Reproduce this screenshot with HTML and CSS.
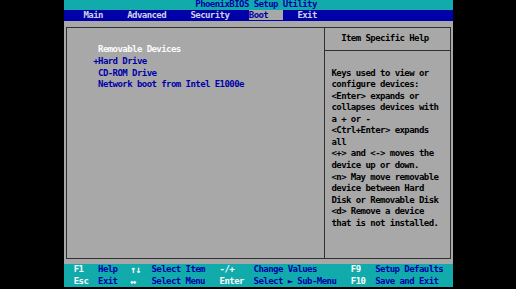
FILE: index.html
```html
<!DOCTYPE html>
<html>
<head>
<meta charset="utf-8">
<title>PhoenixBIOS Setup Utility</title>
<link rel="stylesheet" href="styles.css">
</head>
<body>
<div class="screen">
  <div class="title">PhoenixBIOS Setup Utility</div>
  <div class="menubar">Main     Advanced     Security    <span class="active">Boot   </span>   Exit</div>
  <div class="main">
    <div class="box">
      <div class="left">
        <div class="item white"> Removable Devices</div>
        <div class="item">+Hard Drive</div>
        <div class="item"> CD-ROM Drive</div>
        <div class="item"> Network boot from Intel E1000e</div>
      </div>
      <div class="right">
        <div class="help-head">Item Specific Help</div>
        <div class="help-body">Keys used to view or
configure devices:
&lt;Enter&gt; expands or
collapses devices with
a + or -
&lt;Ctrl+Enter&gt; expands
all
&lt;+&gt; and &lt;-&gt; moves the
device up or down.
&lt;n&gt; May move removable
device between Hard
Disk or Removable Disk
&lt;d&gt; Remove a device
that is not installed.</div>
      </div>
    </div>
  </div>
  <div class="footer">
    <span class="key">F1</span><span class="desc">Help</span><span class="key arrow">↑↓</span><span class="desc">Select Item</span><span class="key">-/+</span><span class="desc">Change Values</span><span class="key">F9</span><span class="desc">Setup Defaults</span>
    <span class="key">Esc</span><span class="desc">Exit</span><span class="key arrow">↔</span><span class="desc">Select Menu</span><span class="key">Enter</span><span class="desc">Select ► Sub-Menu</span><span class="key">F10</span><span class="desc">Save and Exit</span>
  </div>
</div>
</body>
</html>
```
FILE: styles.css
```css
:root {
  --cw: 4.8625px;
  --lh: 11.5625px;
  --teal: #12abab;
  --blue: #0000a8;
  --gray: #a8a8a8;
  --line: #303030;
}
html, body {
  margin: 0;
  padding: 0;
  background: #000;
}
body {
  width: 516px;
  height: 289px;
  overflow: hidden;
}
.screen {
  margin-left: 64px;
  width: 389px;
  height: 289px;
  display: flex;
  flex-direction: column;
  overflow: hidden;
  font-family: "DejaVu Sans Mono", "Liberation Mono", monospace;
  font-size: 9px;
  font-weight: bold;
  letter-spacing: -0.556px;
  line-height: var(--lh);
}
.title,
.menubar,
.item,
.help-head,
.help-body,
.key,
.desc {
  white-space: pre;
}
.title {
  flex: none;
  height: 9.78px;
  line-height: 9.78px;
  background: var(--teal);
  color: var(--blue);
  padding-left: calc(var(--cw) * 27);
}
.menubar {
  flex: none;
  height: var(--lh);
  background: var(--blue);
  color: #d0d0e8;
  padding-left: calc(var(--cw) * 4);
}
.menubar .active {
  background: var(--gray);
  color: var(--blue);
}
.main {
  flex: none;
  box-sizing: border-box;
  height: calc(var(--lh) * 21);
  background: var(--gray);
  padding: 5.28px 1.93px;
  display: flex;
}
.box {
  flex: 1;
  display: flex;
  border: 1px solid var(--line);
}
.left {
  box-sizing: border-box;
  width: 256.71px;
  padding-top: 16.84px;
  padding-left: 26.245px;
  color: var(--blue);
}
.white {
  color: #fcfcfc;
}
.right {
  flex: 1;
  display: flex;
  flex-direction: column;
  border-left: 1px solid var(--line);
  color: #000;
}
.help-head {
  padding: 5.28px 0 5.28px 16.52px;
  border-bottom: 1px solid var(--line);
}
.help-body {
  padding-top: 16.84px;
  padding-left: 6.8px;
}
.footer {
  flex: none;
  height: calc(var(--lh) * 2);
  background: var(--teal);
  padding-left: calc(var(--cw) * 2);
  display: grid;
  grid-template-columns:
    calc(var(--cw) * 5)
    calc(var(--cw) * 6.6)
    calc(var(--cw) * 4.4)
    calc(var(--cw) * 14)
    calc(var(--cw) * 7)
    calc(var(--cw) * 20)
    calc(var(--cw) * 5)
    1fr;
  grid-auto-rows: var(--lh);
}
.key {
  color: #fcfcfc;
}
.key.arrow {
  font-size: 10px;
  letter-spacing: -0.8px;
}
.desc {
  color: var(--blue);
}
```
